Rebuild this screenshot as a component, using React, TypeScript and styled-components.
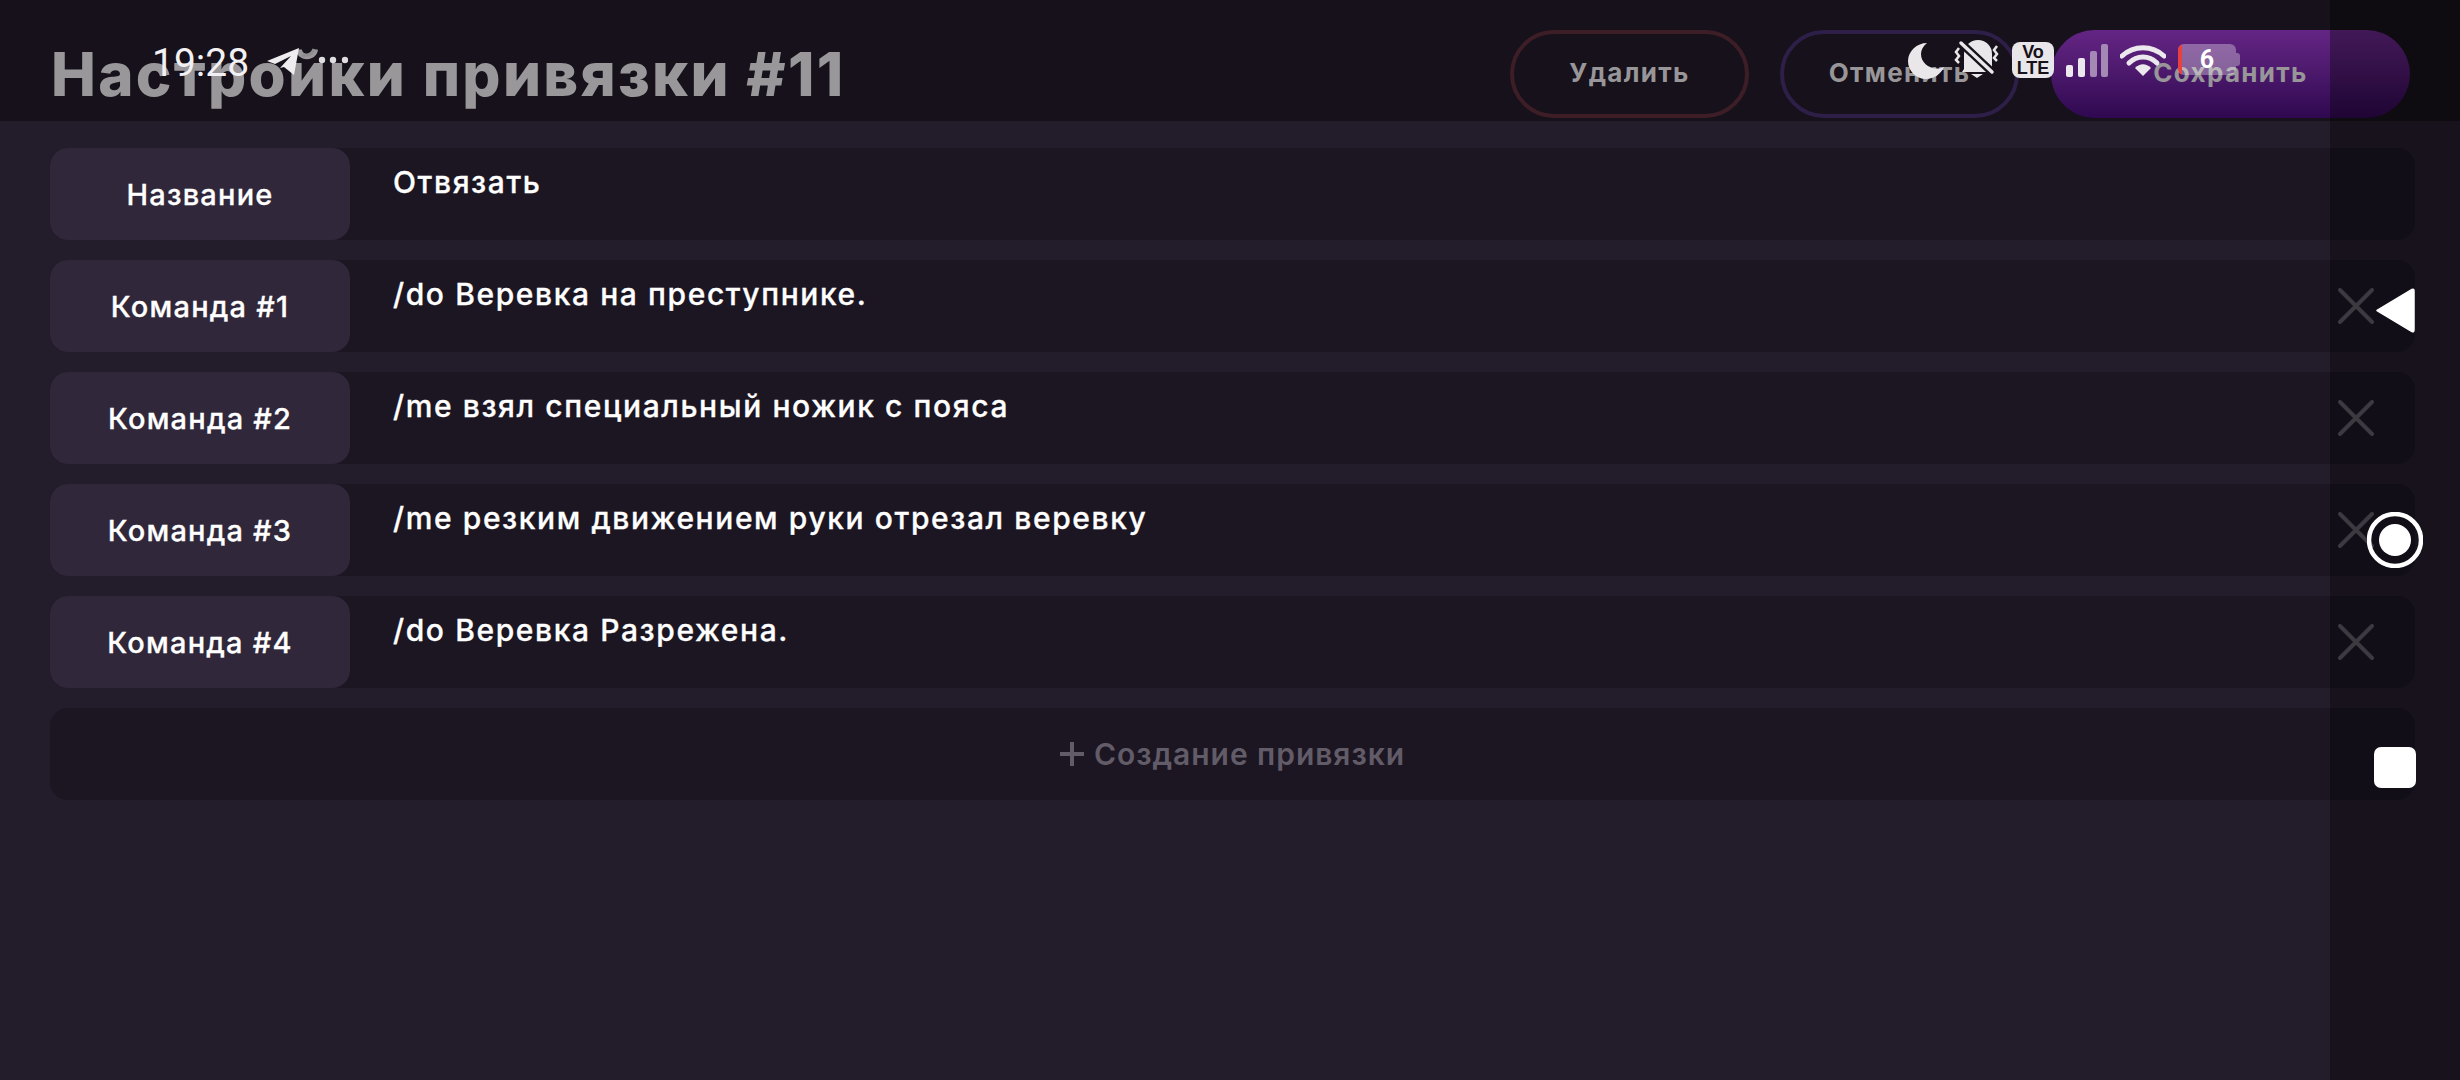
import React from "react";
import styled, { createGlobalStyle } from "styled-components";

const Global = createGlobalStyle`
  html, body { margin: 0; padding: 0; background: #231c2a; }
  #root { width: 2460px; height: 1080px; }
  * { box-sizing: border-box; }
`;

const Screen = styled.div`
  position: relative;
  width: 2460px;
  height: 1080px;
  overflow: hidden;
  background: #231c2a;
  font-family: Inter, "Noto Sans", sans-serif;
  display: flex;
  flex-direction: column;
`;

const Header = styled.header`
  height: 121px;
  flex: none;
  background: #16111a;
  display: flex;
  align-items: flex-start;
  padding: 30px 50px 0 51px;
`;

const Title = styled.h1`
  margin: 0;
  flex: 1;
  font-size: 60px;
  line-height: 88px;
  font-weight: 800;
  color: #999799;
  letter-spacing: 2.3px;
  white-space: nowrap;
`;

const Actions = styled.div`
  display: flex;
  gap: 31px;
`;

const Pill = styled.button<{ $tone: string; $w: number }>`
  width: ${(p) => p.$w}px;
  height: 88px;
  border-radius: 44px;
  border: 4px solid ${(p) => p.$tone};
  background: transparent;
  color: #989698;
  font: 700 26px Inter, sans-serif;
  letter-spacing: 1.3px;
  padding: 0 0 3px;
`;

const SavePill = styled(Pill)`
  border: none;
  margin-left: 1px;
  background: linear-gradient(180deg, #642584 0%, #4e1a6e 45%, #2f0850 100%);
`;

const List = styled.main`
  display: flex;
  flex-direction: column;
  gap: 20px;
  padding: 27px 45px 0 50px;
`;

const Row = styled.div`
  height: 92px;
  display: flex;
  align-items: stretch;
  border-radius: 18px;
  background: #1c1623;
  padding-right: 41px;
`;

const RowLabel = styled.div`
  width: 300px;
  flex: none;
  border-radius: 18px;
  background: #30273a;
  color: #fff;
  font-size: 29px;
  font-weight: 500;
  letter-spacing: 1.2px;
  -webkit-text-stroke: 0.3px #fff;
  display: flex;
  align-items: center;
  justify-content: center;
  padding-top: 1px;
`;

const RowValue = styled.div`
  flex: 1;
  padding: 17px 0 0 43px;
  color: #fff;
  font-size: 30px;
  line-height: 34px;
  font-weight: 500;
  letter-spacing: 1.6px;
  -webkit-text-stroke: 0.3px #fff;
`;

const Remove = styled.svg`
  width: 36px;
  height: 36px;
  align-self: center;
  flex: none;
`;

const AddRow = styled(Row)`
  align-items: center;
  justify-content: center;
  padding: 0;
  color: #625c68;
  font-size: 30px;
  font-weight: 600;
  letter-spacing: 0.95px;
  gap: 10px;
`;

const NavOverlay = styled.div`
  position: absolute;
  top: 0;
  right: 0;
  bottom: 0;
  width: 130px;
  background: rgba(0, 0, 0, 0.34);
`;

const NavIcon = styled.svg<{ $x: number; $y: number; $w: number; $h: number }>`
  position: absolute;
  left: ${(p) => p.$x}px;
  top: ${(p) => p.$y}px;
  width: ${(p) => p.$w}px;
  height: ${(p) => p.$h}px;
`;

const StatusBar = styled.div`
  position: absolute;
  top: 0;
  left: 0;
  width: 2460px;
  height: 100px;
  color: #fff;
`;

const Time = styled.span`
  position: absolute;
  left: 152px;
  top: 40px;
  font: 400 39px/46px Roboto, sans-serif;
  color: #f2f0f2;
`;

const StatusIcon = styled.svg<{ $x: number; $y: number; $w: number; $h: number }>`
  position: absolute;
  left: ${(p) => p.$x}px;
  top: ${(p) => p.$y}px;
  width: ${(p) => p.$w}px;
  height: ${(p) => p.$h}px;
`;

const VoLte = styled.div`
  position: absolute;
  left: 2012px;
  top: 42px;
  width: 42px;
  height: 36px;
  border-radius: 8px;
  background: #e8e6e8;
  color: #16111a;
  font: 700 18px/16px "Liberation Sans", sans-serif;
  display: flex;
  flex-direction: column;
  align-items: center;
  justify-content: center;
`;

const Battery = styled.div`
  position: absolute;
  left: 2178px;
  top: 44px;
  width: 58px;
  height: 31px;
  border-radius: 6px;
  background: rgba(255, 255, 255, 0.32);
  overflow: hidden;
  display: flex;
  align-items: center;
  justify-content: center;
  color: #fff;
  font: 700 25px Roboto, sans-serif;
`;

const BatteryLevel = styled.i`
  position: absolute;
  left: 0;
  top: 0;
  bottom: 0;
  width: 4px;
  background: #e8403f;
`;

const BatteryCap = styled.i`
  position: absolute;
  left: 2236px;
  top: 53px;
  width: 4px;
  height: 13px;
  border-radius: 0 3px 3px 0;
  background: rgba(255, 255, 255, 0.32);
`;

const rows = [
  ["Название", "Отвязать", false],
  ["Команда #1", "/do Веревка на преступнике.", true],
  ["Команда #2", "/me взял специальный ножик с пояса", true],
  ["Команда #3", "/me резким движением руки отрезал веревку", true],
  ["Команда #4", "/do Веревка Разрежена.", true],
] as const;

export default function App() {
  return (
    <Screen>
      <Global />
      <Header>
        <Title>Настройки привязки #11</Title>
        <Actions>
          <Pill $tone="#3e1e26" $w={239}>Удалить</Pill>
          <Pill $tone="#2e1f48" $w={239}>Отменить</Pill>
          <SavePill $tone="transparent" $w={359}>Сохранить</SavePill>
        </Actions>
      </Header>
      <List>
        {rows.map(([label, value, removable]) => (
          <Row key={label}>
            <RowLabel>{label}</RowLabel>
            <RowValue>{value}</RowValue>
            {removable && (
              <Remove viewBox="0 0 36 36">
                <path d="M2 2 34 34M34 2 2 34" stroke="#5d5763" strokeWidth="4" strokeLinecap="round" />
              </Remove>
            )}
          </Row>
        ))}
        <AddRow>
          <svg width="24" height="24" viewBox="0 0 24 24">
            <path d="M12 0v24M0 12h24" stroke="#625c68" strokeWidth="4" />
          </svg>
          Создание привязки
        </AddRow>
      </List>

      <NavOverlay />
      <NavIcon $x={2375} $y={287} $w={40} $h={47} viewBox="0 0 40 47">
        <path d="M2 23.500 37 2.500Q39 1.500 39 4V43Q39 45.500 37 44.500Z" fill="#fff" stroke="#fff" strokeWidth="1.500" strokeLinejoin="round" />
      </NavIcon>
      <NavIcon $x={2367} $y={512} $w={56} $h={56} viewBox="0 0 56 56">
        <circle cx="28" cy="28" r="26" fill="none" stroke="#fff" strokeWidth="4.500" />
        <circle cx="28" cy="28" r="16" fill="#fff" />
      </NavIcon>
      <NavIcon $x={2374} $y={747} $w={42} $h={41} viewBox="0 0 42 41">
        <rect width="42" height="41" rx="7" fill="#fff" />
      </NavIcon>

      <StatusBar>
        <Time>19:28</Time>
        <StatusIcon $x={267} $y={47} $w={50} $h={29} viewBox="0 0 50 29">
          <path d="M0 14 32 1 27 28 17 20 13 21 24 9 8 17Z" fill="#efedef" />
          <path d="M35 8C41 9 45 7 47 2" stroke="#8f8d90" strokeWidth="3" fill="none" />
        </StatusIcon>
        <StatusIcon $x={318} $y={55} $w={30} $h={10} viewBox="0 0 30 10">
          <circle cx="4" cy="5" r="3.200" fill="#dfdde0" />
          <circle cx="15" cy="5" r="3.200" fill="#dfdde0" />
          <circle cx="27" cy="5" r="3.200" fill="#dfdde0" />
        </StatusIcon>
        <StatusIcon $x={1908} $y={43} $w={36} $h={36} viewBox="0 0 36 36">
          <path d="M19 0C9 0 0 8 0 18s8 18 18 18c8 0 15-5 18-12-2 1-5 1.500-7 1.500C20 25.500 13 19 13 11c0-4 2-8 6-11Z" fill="#e9e7e9" />
        </StatusIcon>
        <StatusIcon $x={1954} $y={38} $w={46} $h={42} viewBox="0 0 46 42">
          <path d="M10 31V16A14 14 0 0 1 38 16V31L40 34H8Z" fill="#e9e7e9" />
          <path d="M6 4 39 35" stroke="#16111a" strokeWidth="8" />
          <path d="M7 5 38 34" stroke="#e9e7e9" strokeWidth="3.500" strokeLinecap="round" />
          <path d="M5 10 2 14l3 4-3 4 3 3M43 8l-3 4 3 4-3 4 3 3" stroke="#e9e7e9" strokeWidth="2.500" fill="none" />
          <path d="M17 36h12l-6 4z" fill="#e9e7e9" />
        </StatusIcon>
        <VoLte>
          <span>Vo</span>
          <span>LTE</span>
        </VoLte>
        <StatusIcon $x={2066} $y={44} $w={42} $h={33} viewBox="0 0 42 33">
          <rect x="0" y="21" width="7" height="12" rx="2" fill="#ece9ee" />
          <rect x="12" y="14" width="7" height="19" rx="2" fill="#ece9ee" />
          <rect x="24" y="7" width="7" height="26" rx="2" fill="#a589b5" />
          <rect x="35" y="0" width="7" height="33" rx="2" fill="#a589b5" />
        </StatusIcon>
        <StatusIcon $x={2120} $y={45} $w={46} $h={32} viewBox="0 0 46 32">
          <path d="M2 11C14 0 32 0 44 11" stroke="#ece9ee" strokeWidth="5" fill="none" strokeLinecap="round" />
          <path d="M9 18C17 10 29 10 37 18" stroke="#ece9ee" strokeWidth="5" fill="none" strokeLinecap="round" />
          <path d="M15 23C20 18 26 18 31 23L23 31Z" fill="#ece9ee" />
        </StatusIcon>
        <Battery>
          <BatteryLevel />
          6
        </Battery>
        <BatteryCap />
      </StatusBar>
    </Screen>
  );
}
